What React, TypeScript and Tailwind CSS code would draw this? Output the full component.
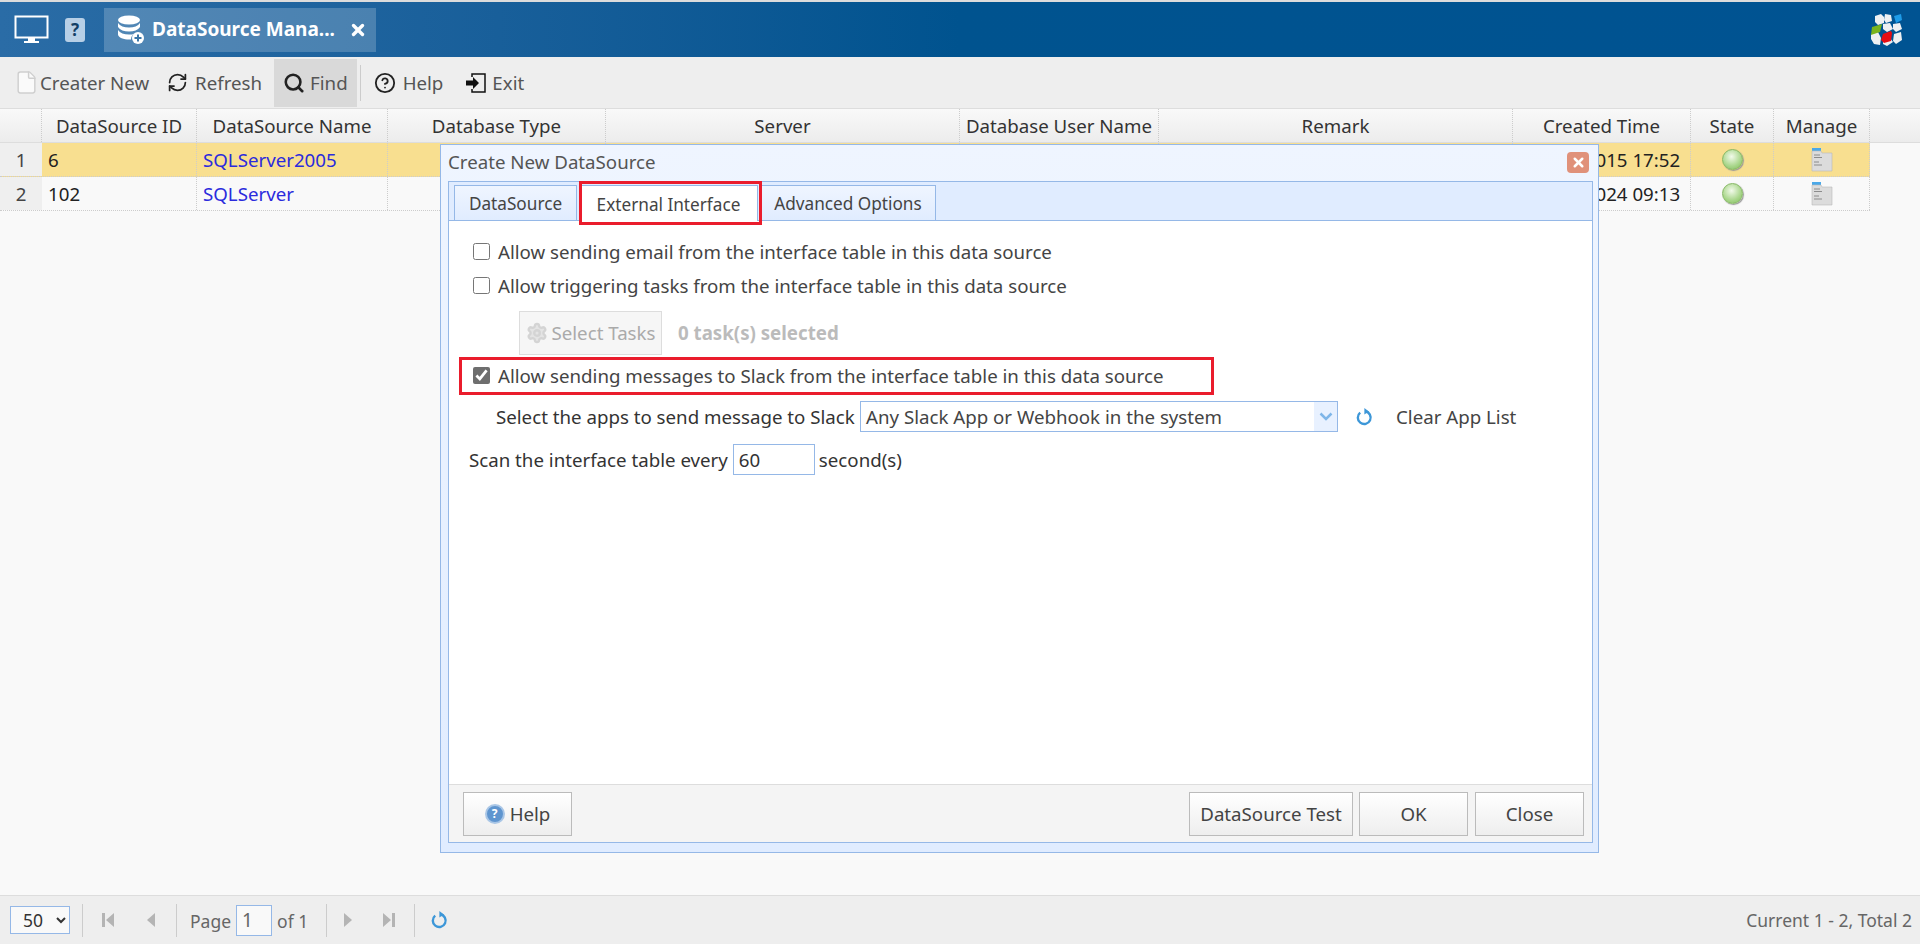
import { CircleHelp, File, RefreshCw, Search, Settings, X } from "lucide-react";

const cols = ["", "DataSource ID", "DataSource Name", "Database Type", "Server", "Database User Name", "Remark", "Created Time", "State", "Manage"];

const rows = [
  { no: "1", id: "6", name: "SQLServer2005", time: "2015 17:52", selected: true },
  { no: "2", id: "102", name: "SQLServer", time: "2024 09:13", selected: false },
];

function BlueRefresh() {
  return (
    <svg width="18" height="18" viewBox="0 0 18 18" fill="none">
      <path d="M5.2 4.6a6.4 6.4 0 1 0 5.2-1.3" stroke="#3d97d8" strokeWidth="2.4" />
      <path d="M9.4 0l4.4 3.4-4.4 3.2z" fill="#3d97d8" />
    </svg>
  );
}

function PagerArrow({ dir }: { dir: "first" | "prev" | "next" | "last" }) {
  return (
    <svg width="14" height="16" viewBox="0 0 14 16" fill="#b4b4b4">
      {dir === "first" && <path d="M1 1h3v14H1zM13 1v14L5 8z" />}
      {dir === "prev" && <path d="M11 1v14L3 8z" />}
      {dir === "next" && <path d="M3 1v14l8-7z" />}
      {dir === "last" && <path d="M1 1v14l8-7zM10 1h3v14h-3z" />}
    </svg>
  );
}

function DbIcon() {
  return (
    <svg width="28" height="30" viewBox="0 0 28 30">
      <g fill="#fff">
        <ellipse cx="12" cy="5" rx="11" ry="4.5" />
        <path d="M1 8c2 3 6 4.5 11 4.5S21 11 23 8v4c-2 3-6 4.5-11 4.5S3 15 1 12z" />
        <path d="M1 15c2 3 6 4.5 11 4.5 2 0 3.5-.2 5-.6-2 1.3-3 3-3 5.5-.7.1-1.3.1-2 .1-5 0-11-2-11-5z" />
      </g>
      <circle cx="21" cy="23" r="6" fill="#fff" />
      <path d="M21 19.5v7M17.5 23h7" stroke="#3a76a8" strokeWidth="2" />
    </svg>
  );
}

function ExitIcon() {
  return (
    <svg width="22" height="22" viewBox="0 0 22 22" fill="none">
      <path d="M7 5V2h13v18H7v-3" stroke="#111" strokeWidth="1.5" />
      <path d="M1 8.5h7V5l6 6-6 6v-3.5H1z" fill="#111" />
    </svg>
  );
}

function Logo() {
  return (
    <svg width="34" height="34" viewBox="0 0 34 34">
      <g fill="#eef0f2">
        <path d="M6 3l6-2 3 3v6l-6 2-3-3z" />
        <path d="M16 1l6 1 1 6-6 2-2-3z" />
        <path d="M24 11l7-1 2 6-6 3-3-3z" />
        <path d="M14 11l7-1 3 6-6 3-4-3z" />
        <path d="M2 21l7-2 3 6-1 7-6-1-3-5z" />
        <path d="M25 21l7-2 1 8-6 4-3-3z" />
        <path d="M14 27l7-2 3 4-6 4-4-2z" />
      </g>
      <path d="M25 3l7-2 1 6-6 3z" fill="#1e9be8" />
      <path d="M3 14l7-2 3-1-2 8-6 2-3 1z" fill="#79b41e" />
      <path d="M14 21l8-3 1 2-1 8-7 2-3-3z" fill="#e50d14" />
    </svg>
  );
}

function ManageIcon() {
  return (
    <svg width="22" height="24" viewBox="0 0 22 24">
      <path d="M1 0h9v3H1z" fill="#4aa8e8" />
      <path d="M1 3h9l1 2h10v18H1z" fill="#dcdcdc" stroke="#b8b8b8" strokeWidth="0.6" />
      <path d="M3 7h6M3 9.5h8M3 14h5M3 17h8" stroke="#777" strokeWidth="0.8" />
    </svg>
  );
}

function Ball() {
  return <div className="h-[21px] w-[21px] rounded-full border border-[#86b864] bg-[radial-gradient(circle_at_45%_35%,#f2faea,#a8d68a_60%,#7fbb5c)] shadow-[1px_1px_1px_#999]" />;
}

function ToolButton({ icon, label, className }: { icon: React.ReactNode; label: string; className?: string }) {
  return (
    <div className={`flex h-[48px] items-center pl-[9px] ${className ?? ""}`}>
      {icon}
      <span className="pt-[2px]">{label}</span>
    </div>
  );
}

function FormCheck({ label, checked }: { label: string; checked?: boolean }) {
  return (
    <label className="flex items-center gap-[8px]">
      <input type="checkbox" checked={!!checked} readOnly className="m-0 h-[17px] w-[17px] accent-[#6e6e6e]" />
      <span>{label}</span>
    </label>
  );
}

function DialogButton({ label, className, icon }: { label: string; className: string; icon?: React.ReactNode }) {
  return (
    <div className={`flex h-[44px] items-center justify-center gap-[5px] border border-[#bbb] bg-gradient-to-b from-[#fff] to-[#eee] text-[#444] ${className}`}>
      {icon}
      <span className="pt-[2px]">{label}</span>
    </div>
  );
}

export default function App() {
  return (
    <div className="relative flex h-screen flex-col overflow-hidden bg-[#f9f9f9] font-['Noto_Sans',sans-serif] text-[18.7px] text-[#444]">
      {/* top bar */}
      <div className="flex h-[57px] shrink-0 items-center border-t-2 border-[#dcdcdc] bg-gradient-to-r from-[#2a6ca6] via-[#00538f] to-[#005392] text-white">
        <svg className="ml-[14px]" width="35" height="30" viewBox="0 0 35 30" fill="none">
          <rect x="1.5" y="1.5" width="32" height="21" stroke="#fff" strokeWidth="2" />
          <path d="M14 23h7v3h4v2H10v-2h4z" fill="#fff" />
        </svg>
        <div className="ml-[16px] flex h-6 w-5 items-center justify-center rounded-[3px] bg-[#b7cfe6] text-[17px] font-bold text-[#123f66]">?</div>
        <div className="ml-[19px] flex h-[44px] w-[272px] items-center bg-white/20 pl-[13px]">
          <DbIcon />
          <span className="ml-[7px] w-[197px] whitespace-nowrap text-[19px] font-bold">DataSource Mana...</span>
          <X size={18} strokeWidth={4.5} />
        </div>
        <div className="ml-auto mr-[17px]">
          <Logo />
        </div>
      </div>

      {/* toolbar */}
      <div className="flex h-[52px] shrink-0 items-center border-b border-[#ddd] bg-[#eee] pl-[5px] text-[#555]">
        <ToolButton className="gap-[1px] pr-[9px]" icon={<File size={25} color="#cfcfcf" fill="#fafafa" strokeWidth={1.4} />} label="Creater New" />
        <ToolButton className="gap-[7px] pr-[12px]" icon={<RefreshCw size={21} color="#222" strokeWidth={2} />} label="Refresh" />
        <ToolButton className="gap-[5px] bg-[#d9d9d9] pr-[9px]" icon={<Search size={22} color="#222" strokeWidth={2.8} />} label="Find" />
        <div className="ml-[3px] mr-[4px] h-[36px] w-px bg-[#ccc]" />
        <ToolButton className="gap-[7px] pr-[13px]" icon={<CircleHelp size={22} color="#222" strokeWidth={2} />} label="Help" />
        <ToolButton className="gap-[5px]" icon={<ExitIcon />} label="Exit" />
      </div>

      {/* grid */}
      <div className="flex h-[34px] shrink-0 border-b border-[#ddd] bg-gradient-to-b from-[#f9f9f9] to-[#ececec] text-[#333]">
        <div className="grid grid-cols-[42px_155px_191px_218px_354px_199px_354px_178px_83px_96px]">
          {cols.map((c, i) => (
            <div key={i} className="flex items-center justify-center whitespace-nowrap border-r border-dotted border-[#ccc] pt-[2px]">
              {c}
            </div>
          ))}
        </div>
      </div>
      {rows.map((r) => (
        <div
          key={r.no}
          className={`grid h-[34px] w-[1870px] shrink-0 grid-cols-[42px_155px_191px_218px_354px_199px_354px_178px_83px_96px] border-b border-dotted border-[#ccc] text-[#222] ${r.selected ? "bg-[#f8df90]" : ""}`}
        >
          <div className="flex items-center justify-center bg-[#efefef] pt-[2px] text-[#444]">{r.no}</div>
          <div className="flex items-center border-r border-dotted border-[#ccc] pl-[6px] pt-[2px]">{r.id}</div>
          <div className="flex items-center border-r border-dotted border-[#ccc] pl-[6px] pt-[2px] text-[#2b2bdd]">{r.name}</div>
          <div className="border-r border-dotted border-[#ccc]" />
          <div className="border-r border-dotted border-[#ccc]" />
          <div className="border-r border-dotted border-[#ccc]" />
          <div className="border-r border-dotted border-[#ccc]" />
          <div className="flex items-center justify-center whitespace-nowrap border-r border-dotted border-[#ccc] pl-[62px] pt-[2px]">{r.time}</div>
          <div className="flex items-center justify-center border-r border-dotted border-[#ccc]">
            <Ball />
          </div>
          <div className="flex items-center justify-center border-r border-dotted border-[#ccc]">
            <ManageIcon />
          </div>
        </div>
      ))}

      {/* pager */}
      <div className="mt-auto flex h-[49px] shrink-0 items-center border-t border-[#ddd] bg-[#eee] pl-[10px] pr-2 text-[17.5px] text-[#666]">
        <select className="h-[28px] w-[60px] border border-[#95b8e7] bg-[#f9f9f9] pl-[8px] text-[#333]" defaultValue="50">
          <option>50</option>
        </select>
        <div className="ml-[12px] h-[33px] w-px bg-[#ccc]" />
        <div className="ml-[18px]"><PagerArrow dir="first" /></div>
        <div className="ml-[29px]"><PagerArrow dir="prev" /></div>
        <div className="ml-[18px] h-[33px] w-px bg-[#ccc]" />
        <span className="ml-[13px] pt-[2px]">Page</span>
        <div className="ml-[5px] flex h-[31px] w-[36px] items-center border border-[#95b8e7] bg-[#f9f9f9] pl-[5px] text-[19px]">1</div>
        <span className="ml-[5px] pt-[2px]">of 1</span>
        <div className="ml-[18px] h-[33px] w-px bg-[#ccc]" />
        <div className="ml-[14px]"><PagerArrow dir="next" /></div>
        <div className="ml-[27px]"><PagerArrow dir="last" /></div>
        <div className="ml-[18px] h-[33px] w-px bg-[#ccc]" />
        <div className="ml-[15px]"><BlueRefresh /></div>
        <span className="ml-auto">Current 1 - 2, Total 2</span>
      </div>

      {/* dialog */}
      <div className="absolute left-[440px] top-[144px] flex h-[709px] w-[1159px] flex-col border border-[#95b8e7] bg-gradient-to-b from-[#eff5ff] to-[#e0ecff] pb-[9px] pl-[7px] pr-[5px]">
        <div className="flex h-[36px] shrink-0 items-center justify-between pb-[2px] text-[#555]">
          <span>Create New DataSource</span>
          <div className="mr-[4px] flex h-[21px] w-[22px] items-center justify-center rounded-[4px] bg-[#e0917a]">
            <X size={15} color="#fff" strokeWidth={4} />
          </div>
        </div>

        <div className="flex flex-1 flex-col border border-[#95b8e7]">
          {/* tabs */}
          <div className="flex h-[39px] shrink-0 items-end gap-[2px] border-b border-[#95b8e7] bg-[#e0ecff] pl-[5px] text-[17.2px]">
            <div className="flex h-[35px] w-[123px] items-center justify-center border border-b-0 border-[#95b8e7] bg-gradient-to-b from-[#eff5ff] to-[#e0ecff] pt-[2px]">DataSource</div>
            <div className="relative -mb-px flex h-[36px] w-[179px] items-center justify-center border border-b-0 border-[#95b8e7] bg-white pt-[2px]">
              External Interface
              <div className="absolute -left-[1px] -right-[5px] -top-[5px] bottom-[-4px] border-[3px] border-[#ea1c2c]" />
            </div>
            <div className="flex h-[35px] w-[176px] items-center justify-center border border-b-0 border-[#95b8e7] bg-gradient-to-b from-[#eff5ff] to-[#e0ecff] pt-[2px]">Advanced Options</div>
          </div>

          {/* tab body */}
          <div className="flex-1 bg-white pt-[14px]">
            <div className="flex h-[34px] items-center pl-[24px]">
              <FormCheck label="Allow sending email from the interface table in this data source" />
            </div>
            <div className="flex h-[34px] items-center pl-[24px]">
              <FormCheck label="Allow triggering tasks from the interface table in this data source" />
            </div>
            <div className="mt-[8px] flex h-[44px] items-center pl-[70px]">
              <div className="flex h-[44px] w-[143px] items-center justify-center gap-[4px] border border-[#ddd] bg-[#f6f6f6] text-[#aaa]">
                <Settings size={22} color="#d4d4d4" fill="#e4e4e4" strokeWidth={2.6} />
                Select Tasks
              </div>
              <span className="ml-[16px] font-bold text-[#bbb]">0 task(s) selected</span>
            </div>
            <div className="ml-[10px] mt-[2px] flex h-[38px] w-[755px] items-center border-[3px] border-[#ea1c2c] pl-[11px]">
              <FormCheck checked label="Allow sending messages to Slack from the interface table in this data source" />
            </div>
            <div className="mt-[6px] flex h-[31px] items-center pl-[47px]">
              <span className="w-[364px] pt-[2px] text-[#333]">Select the apps to send message to Slack</span>
              <div className="flex h-[31px] w-[478px] items-center border border-[#95b8e7]">
                <span className="flex-1 pl-[5px] pt-[2px]">Any Slack App or Webhook in the system</span>
                <div className="flex h-full w-[23px] items-center justify-center bg-[#e8f1ff]">
                  <svg width="14" height="9" viewBox="0 0 14 9" fill="none">
                    <path d="M1.5 1.5L7 7l5.500-5.500" stroke="#7fb6e8" strokeWidth="2.500" />
                  </svg>
                </div>
              </div>
              <div className="ml-[17px]"><BlueRefresh /></div>
              <span className="ml-[23px] pt-[2px]">Clear App List</span>
            </div>
            <div className="mt-[12px] flex h-[31px] items-center pl-[20px] text-[#333]">
              <span className="pt-[2px]">Scan the interface table every</span>
              <div className="ml-[5px] flex h-[31px] w-[82px] items-center border border-[#95b8e7] pl-[5px] pt-[2px]">60</div>
              <span className="ml-[4px] pt-[2px]">second(s)</span>
            </div>
          </div>

          {/* dialog footer */}
          <div className="flex h-[58px] shrink-0 items-center border-t border-[#ddd] bg-[#f4f4f4] pl-[14px] pr-[8px]">
            <DialogButton
              label="Help"
              className="w-[109px]"
              icon={
                <div className="flex h-[20px] w-[20px] items-center justify-center rounded-full border-2 border-[#a9c6e6] bg-[#5f95cf] text-[12px] font-bold text-white">?</div>
              }
            />
            <DialogButton label="DataSource Test" className="ml-auto w-[164px]" />
            <DialogButton label="OK" className="ml-[6px] w-[109px]" />
            <DialogButton label="Close" className="ml-[7px] w-[109px]" />
          </div>
        </div>
      </div>
    </div>
  );
}
